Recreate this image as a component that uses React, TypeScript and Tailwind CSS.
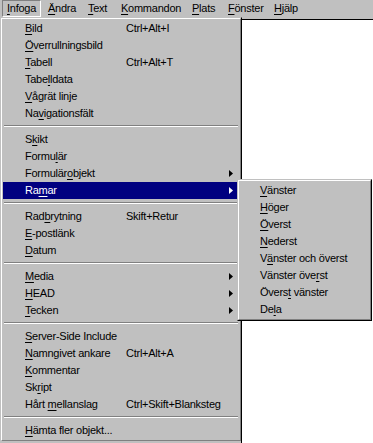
import React from "react";

type It = { l: [string, string, string]; s?: string; arrow?: boolean; active?: boolean } | "sep";

const main: It[] = [
  { l: ["", "B", "ild"], s: "Ctrl+Alt+I" },
  { l: ["", "Ö", "verrullningsbild"] },
  { l: ["", "T", "abell"], s: "Ctrl+Alt+T" },
  { l: ["Tabe", "l", "ldata"] },
  { l: ["", "V", "ågrät linje"] },
  { l: ["Na", "v", "igationsfält"] },
  "sep",
  { l: ["S", "k", "ikt"] },
  { l: ["Formu", "l", "är"] },
  { l: ["Formulär", "o", "bjekt"], arrow: true },
  { l: ["Ra", "m", "ar"], arrow: true, active: true },
  "sep",
  { l: ["Rad", "b", "rytning"], s: "Skift+Retur" },
  { l: ["", "E", "-postlänk"] },
  { l: ["", "D", "atum"] },
  "sep",
  { l: ["", "M", "edia"], arrow: true },
  { l: ["", "H", "EAD"], arrow: true },
  { l: ["", "T", "ecken"], arrow: true },
  "sep",
  { l: ["", "S", "erver-Side Include"] },
  { l: ["", "N", "amngivet ankare"], s: "Ctrl+Alt+A" },
  { l: ["", "K", "ommentar"] },
  { l: ["Sk", "r", "ipt"] },
  { l: ["Hårt ", "m", "ellanslag"], s: "Ctrl+Skift+Blanksteg" },
  "sep",
  { l: ["", "H", "ämta fler objekt..."] },
];

const sub: [string, string, string][] = [
  ["", "V", "änster"],
  ["", "H", "öger"],
  ["", "Ö", "verst"],
  ["", "N", "ederst"],
  ["V", "ä", "nster och överst"],
  ["Vänster öve", "r", "st"],
  ["Övers", "t", " vänster"],
  ["De", "l", "a"],
];

function Lbl({ l }: { l: [string, string, string] }) {
  return (
    <>
      {l[0]}
      <span className="underline decoration-1 underline-offset-[2px]">{l[1]}</span>
      {l[2]}
    </>
  );
}

function Arrow({ white }: { white?: boolean }) {
  return (
    <svg width="4" height="7" viewBox="0 0 4 7" className="block">
      <polygon points="0,0 4,3.5 0,7" fill={white ? "#ffffff" : "#000000"} />
    </svg>
  );
}

function Frame({ children, className }: { children: React.ReactNode; className?: string }) {
  return (
    <div className={"border border-t-[#c0c0c0] border-l-[#c0c0c0] border-r-black border-b-black bg-[#c0c0c0] " + (className ?? "")}>
      <div className="border border-t-white border-l-white border-r-[#808080] border-b-[#808080] p-[1px]">{children}</div>
    </div>
  );
}

const bar: { t: [string, string, string]; w: number }[] = [
  { t: ["", "Ä", "ndra"], w: 40 },
  { t: ["", "T", "ext"], w: 33 },
  { t: ["", "K", "ommandon"], w: 71 },
  { t: ["", "P", "lats"], w: 36 },
  { t: ["", "F", "önster"], w: 46 },
  { t: ["", "H", "jälp"], w: 44 },
];

export default function App() {
  return (
    <div
      className="relative w-[373px] h-[443px] overflow-hidden bg-[#c0c0c0] text-[11px] leading-none text-black tracking-[-0.25px]"
      style={{ fontFamily: '"Liberation Sans", Arial, sans-serif' }}
    >
      {/* menu bar */}
      <div className="flex h-[17px] items-stretch">
        <div className="ml-[2px] w-[39px] h-[17px] border border-t-[#808080] border-l-[#808080] border-r-white border-b-white pl-[4px] pt-[2px]">
          <Lbl l={["", "I", "nfoga"]} />
        </div>
        <div className="w-[1px]" />
        {bar.map((b, i) => (
          <div key={i} style={{ width: b.w }} className="flex items-center pl-[6px]">
            <span>
              <Lbl l={b.t} />
            </span>
          </div>
        ))}
      </div>

      <div className="flex">
        {/* main menu */}
        <Frame className="w-[242px] shrink-0">
          {main.map((it, i) =>
            it === "sep" ? (
              <div key={i} className="h-[9px] pt-[3px] px-[1px]">
                <div className="h-[1px] bg-[#808080]" />
                <div className="h-[1px] bg-white" />
              </div>
            ) : (
              <div
                key={i}
                className={
                  "flex h-[17px] items-center pl-[22px] pr-[6px] " +
                  (it.active ? "bg-[#000080] text-white" : "")
                }
              >
                <span className="w-[101px] shrink-0 whitespace-nowrap">
                  <Lbl l={it.l} />
                </span>
                {it.s && <span className="whitespace-nowrap">{it.s}</span>}
                {it.arrow && (
                  <span className="ml-auto">
                    <Arrow white={it.active} />
                  </span>
                )}
              </div>
            )
          )}
        </Frame>

        {/* document area */}
        <div className="flex-1 pt-[2px]">
          <div className="h-[430px] bg-white border-t border-black" />
        </div>
      </div>

      {/* submenu */}
      <Frame className="absolute left-[237px] top-[179px] w-[135px]">
        {sub.map((l, i) => (
          <div key={i} className="flex h-[17px] items-center pl-[20px] whitespace-nowrap">
            <span>
              <Lbl l={l} />
            </span>
          </div>
        ))}
      </Frame>
    </div>
  );
}
